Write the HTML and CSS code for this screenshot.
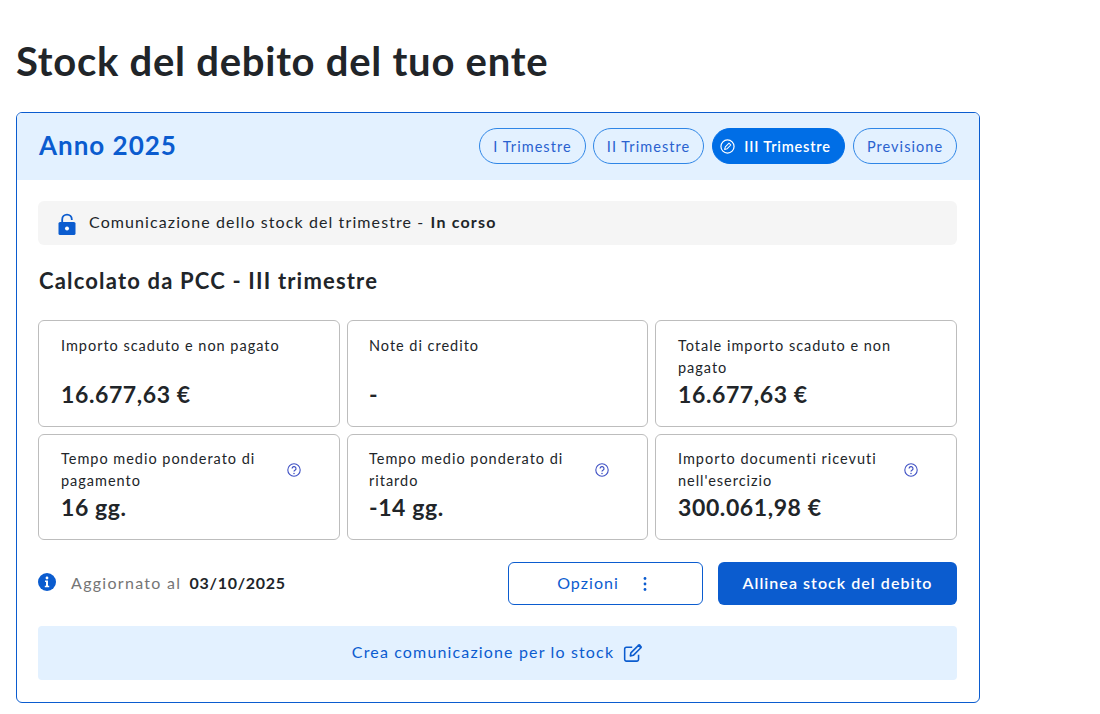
FILE: index.html
```html
<!DOCTYPE html>
<html lang="it">
<head>
<meta charset="utf-8">
<title>Stock del debito</title>
<link rel="stylesheet" href="styles.css">
</head>
<body>
<main class="page">
  <h1 class="title">Stock del debito del tuo ente</h1>
  <section class="panel">
    <header class="panel-head">
      <h2 class="year">Anno 2025</h2>
      <nav class="pills">
        <a class="pill pill-1">I Trimestre</a>
        <a class="pill pill-2">II Trimestre</a>
        <a class="pill pill-3 active">
          <svg class="pill-icon" viewBox="0 0 16 16" fill="none" stroke="#fff" stroke-width="1.3"><circle cx="8" cy="8" r="7"/><path d="M4.9 11.1l.8-2.8 3.9-3.9 2 2-3.9 3.9z" stroke-width="1.1" stroke-linejoin="round"/></svg>
          III Trimestre
        </a>
        <a class="pill pill-4">Previsione</a>
      </nav>
    </header>
    <div class="panel-body">
      <div class="notice">
        <svg class="lock" viewBox="0 0 18 22"><path d="M4.2 10V6.4a4.8 4.8 0 0 1 9.6 0V7" fill="none" stroke="#0b5ccf" stroke-width="1.8"/><rect x="0.5" y="9" width="17" height="13" rx="1.6" fill="#0b5ccf"/><circle cx="9" cy="15.5" r="2" fill="#fff"/></svg>
        <span>Comunicazione dello stock del trimestre - <b class="strong">In corso</b></span>
      </div>
      <h3 class="section-title">Calcolato da PCC - III trimestre</h3>
      <div class="grid">
        <div class="tile">
          <div class="tile-label"><span>Importo scaduto e non pagato</span></div>
          <div class="tile-value">16.677,63 €</div>
        </div>
        <div class="tile">
          <div class="tile-label"><span>Note di credito</span></div>
          <div class="tile-value">-</div>
        </div>
        <div class="tile">
          <div class="tile-label"><span>Totale importo scaduto e non pagato</span></div>
          <div class="tile-value">16.677,63 €</div>
        </div>
        <div class="tile tile-low">
          <div class="tile-label"><span>Tempo medio ponderato di pagamento</span>
            <svg class="help" viewBox="0 0 14 14" fill="none" stroke="#3f51c4"><circle cx="7" cy="7" r="6.2" stroke-width="1.1"/><path d="M5.1 5.5a1.95 1.95 0 1 1 2.9 1.7c-.7.4-1 .7-1 1.4" stroke-width="1.2"/><circle cx="7" cy="10.4" r=".75" fill="#3f51c4" stroke="none"/></svg>
          </div>
          <div class="tile-value">16 gg.</div>
        </div>
        <div class="tile tile-low">
          <div class="tile-label"><span>Tempo medio ponderato di ritardo</span>
            <svg class="help" viewBox="0 0 14 14" fill="none" stroke="#3f51c4"><circle cx="7" cy="7" r="6.2" stroke-width="1.1"/><path d="M5.1 5.5a1.95 1.95 0 1 1 2.9 1.7c-.7.4-1 .7-1 1.4" stroke-width="1.2"/><circle cx="7" cy="10.4" r=".75" fill="#3f51c4" stroke="none"/></svg>
          </div>
          <div class="tile-value">-14 gg.</div>
        </div>
        <div class="tile tile-low">
          <div class="tile-label"><span>Importo documenti ricevuti nell'esercizio</span>
            <svg class="help" viewBox="0 0 14 14" fill="none" stroke="#3f51c4"><circle cx="7" cy="7" r="6.2" stroke-width="1.1"/><path d="M5.1 5.5a1.95 1.95 0 1 1 2.9 1.7c-.7.4-1 .7-1 1.4" stroke-width="1.2"/><circle cx="7" cy="10.4" r=".75" fill="#3f51c4" stroke="none"/></svg>
          </div>
          <div class="tile-value">300.061,98 €</div>
        </div>
      </div>
      <div class="footer-row">
        <div class="updated">
          <svg class="info" viewBox="0 0 18 18"><circle cx="9" cy="9" r="9" fill="#0b5ccf"/><circle cx="9" cy="5" r="1.4" fill="#fff"/><path d="M7 7.6h3v5.2h1.2v1.4H6.8v-1.4H8V9H7z" fill="#fff"/></svg>
          <span class="updated-label">Aggiornato al</span>
          <b class="updated-date">03/10/2025</b>
        </div>
        <button class="btn btn-outline"><span class="btn-text">Opzioni</span>
          <svg class="dots" viewBox="0 0 4 16" fill="#0b5ccf"><circle cx="2" cy="2.5" r="1.4"/><circle cx="2" cy="8" r="1.4"/><circle cx="2" cy="13.5" r="1.4"/></svg>
        </button>
        <button class="btn btn-solid"><span class="btn-text">Allinea stock del debito</span></button>
      </div>
      <a class="create"><span class="create-text">Crea comunicazione per lo stock</span>
        <svg class="edit" viewBox="0 0 18 18" fill="none" stroke="#0b5ccf" stroke-width="1.4"><path d="M14 10.5v4.2a1.6 1.6 0 0 1-1.6 1.6H3.1a1.6 1.6 0 0 1-1.6-1.6V5.4a1.6 1.6 0 0 1 1.6-1.6h5.2"/><path d="M6.6 11.6l.5-2.7 6.8-6.8 2.2 2.2-6.8 6.8z" stroke-linejoin="round"/><path d="M13.2 1.6l3.2 3.2 .8-1.2-2-2.6z" fill="#0b5ccf" stroke="none"/></svg>
      </a>
    </div>
  </section>
</main>
</body>
</html>
```
FILE: styles.css
```css
* { box-sizing: border-box; }
html, body { margin: 0; padding: 0; background: #fff; }
body {
  font-family: "Lato", "Noto Sans", sans-serif;
  color: #1c1c1e;
}
.page { width: 980px; padding: 0 0 0 16px; }
.title {
  margin: 0;
  padding-top: 36px;
  height: 112px;
  font-size: 40px;
  line-height: 50px;
  font-weight: 700;
  letter-spacing: 0.74px;
  color: #212529;
}
.panel {
  width: 964px;
  height: 591px;
  border: 1px solid #0b5ccf;
  border-radius: 6px;
  overflow: hidden;
}
.panel-head {
  height: 67px;
  background: #e3f1ff;
  display: flex;
  align-items: center;
  justify-content: space-between;
  padding: 0 22px 1px 22px;
}
.year {
  margin: -2px 0 0;
  font-size: 26px;
  font-weight: 700;
  letter-spacing: 1px;
  color: #0b5ccf;
}
.pills { display: flex; gap: 8px; }
.pill {
  height: 36px;
  border: 1px solid #2f86e6;
  border-radius: 18px;
  display: flex;
  align-items: center;
  justify-content: center;
  gap: 7px;
  font-size: 14.5px;
  letter-spacing: 1.05px;
  color: #2a62cf;
}
.pill-1 { width: 107px; margin-right: -1px; }
.pill-2 { width: 111px; }
.pill-3 { width: 133px; padding-right: 6px; gap: 9px; }
.pill-4 { width: 104px; }
.pill.active {
  background: #006ee6;
  border-color: #006ee6;
  color: #fff;
  font-weight: 600;
  letter-spacing: 0.8px;
}
.pill-icon { width: 15px; height: 15px; }
.panel-body { padding: 21px 22px 0 21px; }
.notice {
  height: 44px;
  background: #f5f5f5;
  border-radius: 6px;
  display: flex;
  align-items: center;
  gap: 13px;
  padding-left: 20px;
  font-size: 16px;
  letter-spacing: 1.1px;
  color: #212529;
}
.notice > span { margin-top: -4px; }
.strong { margin-left: 1px; letter-spacing: 1.2px; }
.lock { width: 18px; height: 22px; margin-top: 1px; }
.section-title {
  margin: 0;
  padding: 22px 0 0 1px;
  height: 75px;
  font-size: 22px;
  line-height: 28px;
  font-weight: 700;
  letter-spacing: 1.17px;
  color: #212529;
}
.grid {
  display: grid;
  grid-template-columns: 302px 301px 302px;
  grid-template-rows: 107px 106px;
  gap: 7px;
}
.tile {
  border: 1px solid #bdbdbd;
  border-radius: 6px;
  padding: 14px 22px 0 22px;
  display: flex;
  flex-direction: column;
}
.tile:nth-child(3n+2) { padding-left: 21px; }
.tile-low { padding-top: 13px; }
.tile-label {
  height: 44px;
  display: flex;
  align-items: center;
  justify-content: space-between;
  font-size: 14.5px;
  line-height: 22px;
  letter-spacing: 0.98px;
  color: #212529;
}
.tile-label > span { align-self: flex-start; }
.tile:nth-child(3) .tile-label > span { width: 230px; }
.tile-low .tile-label > span { width: 205px; }
.help { width: 14px; height: 14px; flex: none; margin: 0 16px 0 0; }
.tile-value {
  margin-top: 0;
  font-size: 23px;
  line-height: 30px;
  font-weight: 700;
  letter-spacing: 0.6px;
  color: #212529;
}
.footer-row {
  display: flex;
  align-items: center;
  margin-top: 22px;
  height: 43px;
}
.updated {
  flex: 1;
  display: flex;
  align-items: center;
  font-size: 16px;
}
.info { width: 18px; height: 18px; margin-top: -3px; }
.updated-label { margin-left: 15px; color: #757575; margin-top: -2px; letter-spacing: 1.3px; }
.updated-date { margin-left: 8px; color: #212529; margin-top: -2px; letter-spacing: 0.72px; }
.btn {
  height: 43px;
  border-radius: 6px;
  font-family: inherit;
  font-size: 16px;
  letter-spacing: 1.05px;
  display: flex;
  align-items: center;
  justify-content: center;
}
.btn-text { margin-top: -2px; }
.btn-outline {
  width: 195px;
  background: #fff;
  border: 1px solid #0b5ccf;
  color: #0b5ccf;
  gap: 24px;
  margin-right: 15px;
  padding: 0 7px 0 0;
}
.dots { width: 4px; height: 16px; }
.btn-solid {
  width: 239px;
  background: #0b5ccf;
  border: 0;
  color: #fff;
  font-weight: 600;
}
.create {
  margin-top: 21px;
  height: 54px;
  background: #e3f1ff;
  border-radius: 4px;
  display: flex;
  align-items: center;
  justify-content: center;
  gap: 9px;
  font-size: 16px;
  letter-spacing: 1.15px;
  color: #0b5ccf;
}
.create-text { margin-top: -3px; }
.edit { width: 20px; height: 20px; }
```
